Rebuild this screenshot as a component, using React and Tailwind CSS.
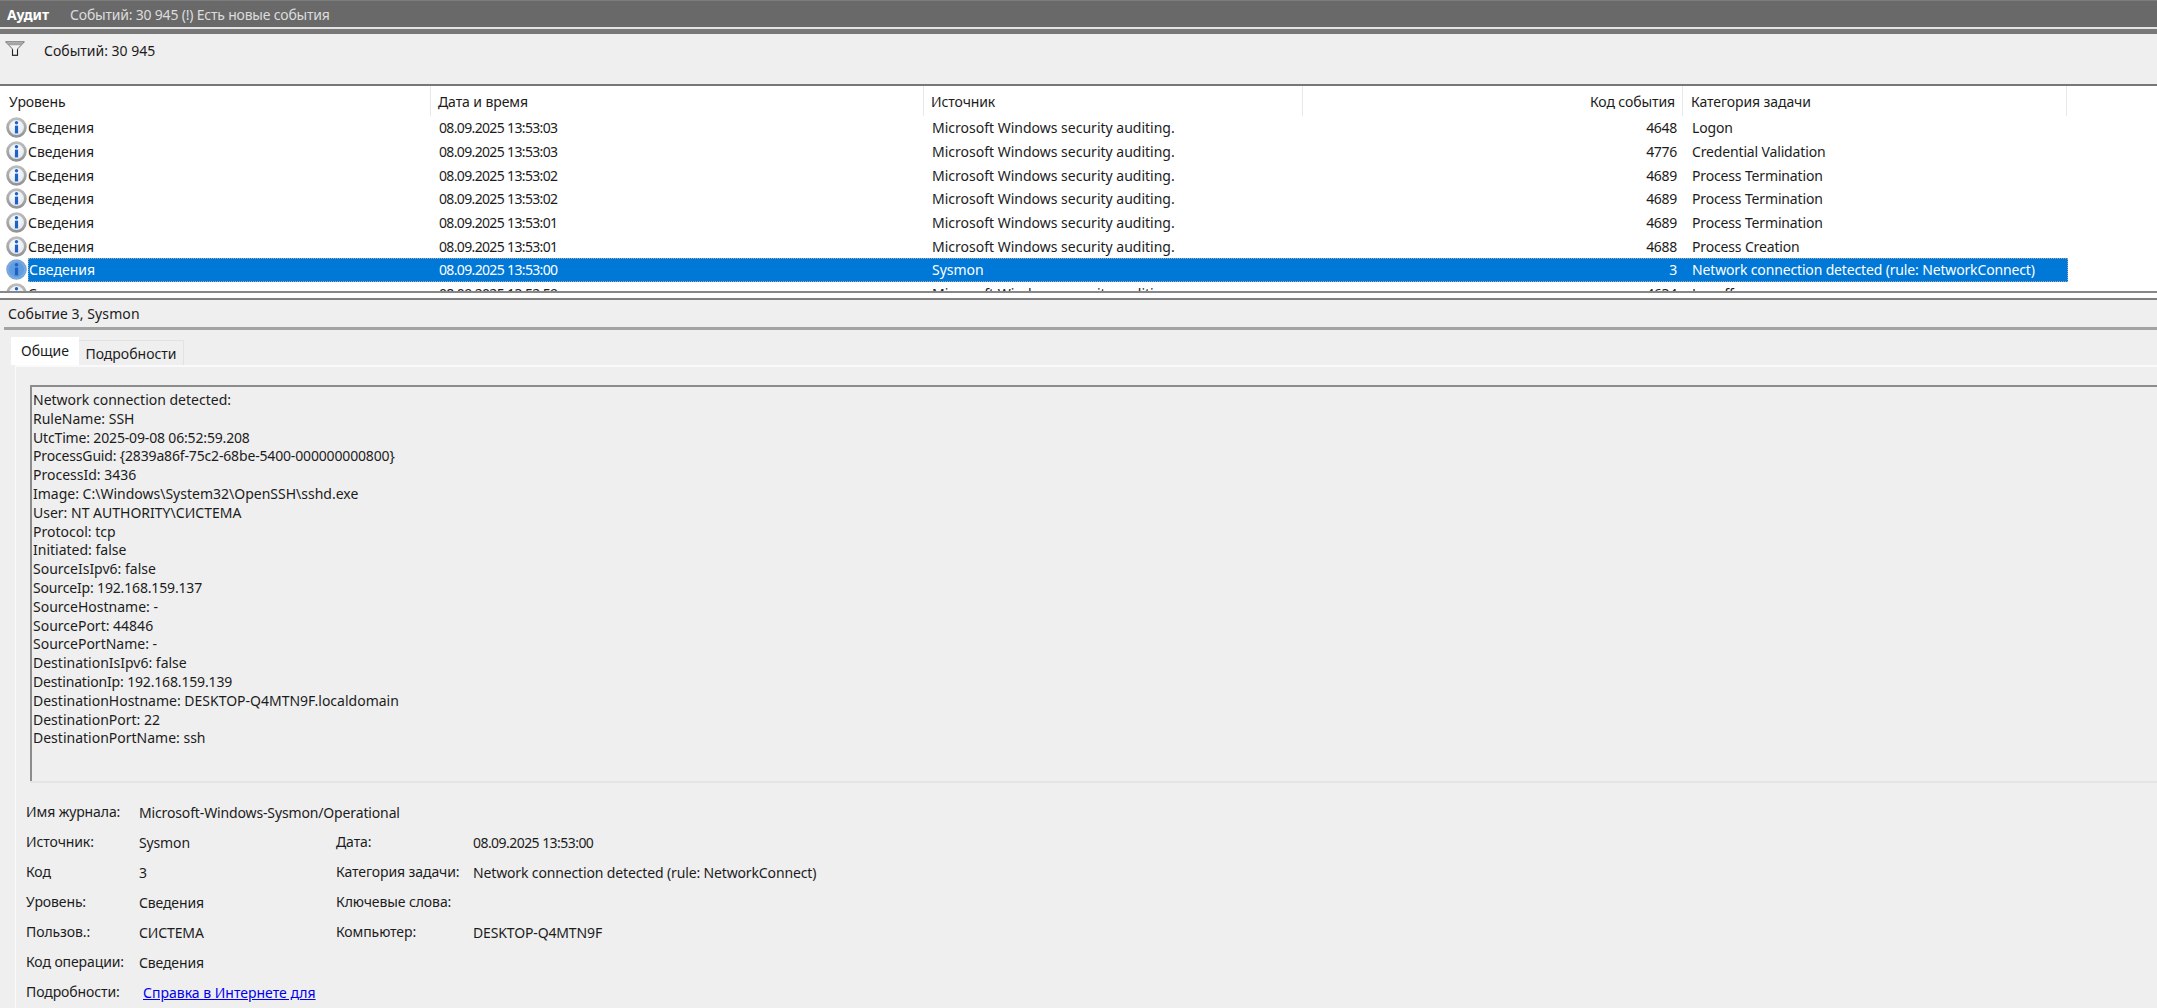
import React from 'react';

const font = "[font-family:'Noto_Sans',sans-serif]";

const rows = [
  { date: '08.09.2025 13:53:03', source: 'Microsoft Windows security auditing.', code: '4648', task: 'Logon' },
  { date: '08.09.2025 13:53:03', source: 'Microsoft Windows security auditing.', code: '4776', task: 'Credential Validation' },
  { date: '08.09.2025 13:53:02', source: 'Microsoft Windows security auditing.', code: '4689', task: 'Process Termination' },
  { date: '08.09.2025 13:53:02', source: 'Microsoft Windows security auditing.', code: '4689', task: 'Process Termination' },
  { date: '08.09.2025 13:53:01', source: 'Microsoft Windows security auditing.', code: '4689', task: 'Process Termination' },
  { date: '08.09.2025 13:53:01', source: 'Microsoft Windows security auditing.', code: '4688', task: 'Process Creation' },
  { date: '08.09.2025 13:53:00', source: 'Sysmon', code: '3', task: 'Network connection detected (rule: NetworkConnect)', selected: true },
  { date: '08.09.2025 13:52:59', source: 'Microsoft Windows security auditing.', code: '4634', task: 'Logoff' },
];

// tight: lines full of digits, which run narrower in the original font
const message = [
  { text: 'Network connection detected:' },
  { text: 'RuleName: SSH' },
  { text: 'UtcTime: 2025-09-08 06:52:59.208', tight: true },
  { text: 'ProcessGuid: {2839a86f-75c2-68be-5400-000000000800}', tight: true },
  { text: 'ProcessId: 3436' },
  { text: 'Image: C:\\Windows\\System32\\OpenSSH\\sshd.exe' },
  { text: 'User: NT AUTHORITY\\СИСТЕМА' },
  { text: 'Protocol: tcp' },
  { text: 'Initiated: false' },
  { text: 'SourceIsIpv6: false' },
  { text: 'SourceIp: 192.168.159.137', tight: true },
  { text: 'SourceHostname: -' },
  { text: 'SourcePort: 44846' },
  { text: 'SourcePortName: -' },
  { text: 'DestinationIsIpv6: false' },
  { text: 'DestinationIp: 192.168.159.139', tight: true },
  { text: 'DestinationHostname: DESKTOP-Q4MTN9F.localdomain' },
  { text: 'DestinationPort: 22' },
  { text: 'DestinationPortName: ssh' },
];

function InfoIcon({ selected }) {
  return (
    <svg width="21" height="21" viewBox="0 0 21 21" className="shrink-0">
      <defs>
        <radialGradient id="infoFill" cx="0.45" cy="0.4" r="0.7">
          <stop offset="0" stopColor="#ffffff" />
          <stop offset="1" stopColor="#d5e0ee" />
        </radialGradient>
        <linearGradient id="infoRing" x1="0" y1="0" x2="0" y2="1">
          <stop offset="0" stopColor="#bcbcbc" />
          <stop offset="1" stopColor="#949494" />
        </linearGradient>
      </defs>
      <circle cx="10.5" cy="10.5" r="8.9" fill={selected ? '#5f9de0' : 'url(#infoFill)'} stroke={selected ? '#79a8dc' : 'url(#infoRing)'} strokeWidth="2.8" />
      <circle cx="10.5" cy="5.8" r="1.7" fill="#1d62c4" />
      <path d="M8.9 8.6h3.2v7.8H8.9z" fill="#1d62c4" />
    </svg>
  );
}

function FilterIcon() {
  return (
    <svg width="20" height="15" viewBox="0 0 20 15">
      <path d="M.6.8h18.8L12.5 8v6.4h-5V8z" fill="#f2f2f2" stroke="#6a6a6a" strokeWidth="1" />
      <path d="M1.5 1.2h17l-2.8 3H4.3z" fill="#a4a4a4" />
      <path d="M12.5 8.5v5.8h-5V8.5" fill="none" stroke="#222" strokeWidth="1.1" />
    </svg>
  );
}

function EventRow({ row }) {
  const cell = row.selected ? 'text-white' : 'text-[#1c1c1c]';
  return (
    <div className={`grid h-[23.7px] grid-cols-[27px_404px_493px_379px_380px_384px] items-center text-[14px] ${cell}`}>
      <div className="flex items-center pl-[5px]">
        <InfoIcon selected={row.selected} />
      </div>
      <div className={`col-span-5 grid h-full grid-cols-subgrid items-center ${row.selected ? 'border border-dotted border-[#9aa5b0] bg-[#0078d7]' : ''}`}>
        <span>Сведения</span>
        <span className="pl-[7px] tracking-[-0.65px]">{row.date}</span>
        <span className="pl-[7px]">{row.source}</span>
        <span className="pr-[7px] text-right tracking-[-0.3px]">{row.code}</span>
        <span className="pl-[8px] whitespace-nowrap tracking-[-0.15px]">{row.task}</span>
      </div>
    </div>
  );
}

function HeaderCell({ children, className = '' }) {
  return (
    <div className={`flex h-[30px] items-center border-r border-[#e8e8e8] tracking-[-0.1px] ${className}`}>
      {children}
    </div>
  );
}

function Field({ label, value, link, tight }) {
  return (
    <>
      <span className="pb-[2px] whitespace-nowrap tracking-[-0.1px]">{label}</span>
      {link ? (
        <a className="pl-[4px] whitespace-nowrap text-[#0000ee] underline">{value}</a>
      ) : (
        <span className={`whitespace-nowrap ${tight ? 'tracking-[-0.55px]' : 'tracking-[-0.14px]'}`}>{value}</span>
      )}
    </>
  );
}

export default function App() {
  return (
    <div className={`flex h-[1008px] w-[2157px] flex-col overflow-hidden bg-[#efefef] ${font}`}>
      {/* title bar */}
      <div className="flex h-[27px] shrink-0 items-center border-t border-[#7c7c7c] bg-[#696969] pl-[7px] text-[14px]">
        <span className="w-[63px] font-bold text-white">Аудит</span>
        <span className="tracking-[-0.2px] text-[#dcdcdc]">Событий: 30 945 (!) Есть новые события</span>
      </div>
      <div className="h-[2px] shrink-0 bg-[#e4e4e4]" />
      <div className="h-[5px] shrink-0 bg-[#787878]" />

      {/* filter strip */}
      <div className="flex h-[52px] shrink-0 items-start border-b-2 border-[#777777] pt-[7px] pl-[5px] text-[14px] text-[#1c1c1c]">
        <FilterIcon />
        <span className="ml-[19px] -mt-[1px]">Событий: 30 945</span>
      </div>

      {/* event list */}
      <div className="h-[207px] shrink-0 overflow-hidden border-b-2 border-[#888888] bg-white pl-[1px]">
        <div className="grid h-[30px] grid-cols-[430px_493px_379px_380px_384px] text-[14px] text-[#1c1c1c]">
          <HeaderCell className="pl-[8px]">Уровень</HeaderCell>
          <HeaderCell className="pl-[7px]">Дата и время</HeaderCell>
          <HeaderCell className="pl-[7px]">Источник</HeaderCell>
          <HeaderCell className="justify-end pr-[7px]">Код события</HeaderCell>
          <HeaderCell className="pl-[8px]">Категория задачи</HeaderCell>
        </div>
        {rows.map((row, i) => (
          <EventRow key={i} row={row} />
        ))}
      </div>
      <div className="h-[5px] shrink-0 bg-white" />

      {/* preview pane */}
      <div className="flex min-h-0 flex-1 flex-col border-t-2 border-[#808080]">
        <div className="flex h-[27px] shrink-0 items-center pl-[8px] text-[14px] text-[#1c1c1c]">
          <span className="tracking-[0.1px]">Событие 3, Sysmon</span>
        </div>
        <div className="ml-[4px] h-[3px] shrink-0 bg-[#a3a3a3]" />

        <div className="flex h-[35px] shrink-0 items-end pl-[11px] text-[14px] text-[#1c1c1c]">
          <div className="flex h-[28px] w-[68px] items-center justify-center bg-white pb-[2px]">Общие</div>
          <div className="flex h-[25px] w-[105px] items-center justify-center border-t border-r border-[#e2e2e2]">Подробности</div>
        </div>

        <div className="ml-[15px] flex min-h-0 flex-1 flex-col border-t-2 border-l border-[#fafafa] pt-[18px] text-[14px] text-[#1c1c1c]">
          <div className="ml-[14px] h-[396px] shrink-0 border-t-2 border-l-2 border-[#8c8c8c] pt-[4px] pl-[1px] leading-[18.8px]">
            {message.map((line) => (
              <div key={line.text} className={`whitespace-nowrap ${line.tight ? 'tracking-[-0.16px]' : ''}`}>{line.text}</div>
            ))}
          </div>
          <div className="ml-[14px] h-[2px] shrink-0 bg-[#e4e4e4]" />

          <div className="mt-[14px] grid auto-rows-[30.1px] grid-cols-[113px_197px_137px_1fr] items-center pl-[10px]">
            <Field label="Имя журнала:" value="Microsoft-Windows-Sysmon/Operational" />
            <span />
            <span />
            <Field label="Источник:" value="Sysmon" />
            <Field label="Дата:" value="08.09.2025 13:53:00" tight />
            <Field label="Код" value="3" />
            <Field label="Категория задачи:" value="Network connection detected (rule: NetworkConnect)" />
            <Field label="Уровень:" value="Сведения" />
            <Field label="Ключевые слова:" value="" />
            <Field label="Пользов.:" value="СИСТЕМА" />
            <Field label="Компьютер:" value="DESKTOP-Q4MTN9F" />
            <Field label="Код операции:" value="Сведения" />
            <span />
            <span />
            <Field label="Подробности:" value="Справка в Интернете для" link />
          </div>
        </div>
      </div>
    </div>
  );
}
